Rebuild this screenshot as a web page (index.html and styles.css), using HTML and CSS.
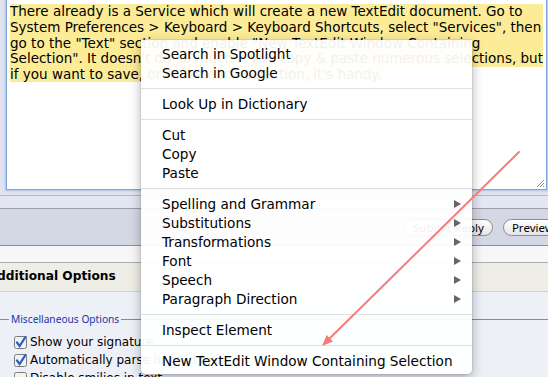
FILE: index.html
```html
<!DOCTYPE html>
<html lang="en">
<head>
  <meta charset="UTF-8" />
  <meta name="viewport" content="width=device-width, initial-scale=1.0" />
  <title>Reply</title>
  <link rel="stylesheet" href="styles.css">
</head>
<body>
  <div class="page">
    <div class="editor">
      <div class="textarea">
        <div class="line hl">There already is a Service which will create a new TextEdit document. Go to</div>
        <div class="line hl">System Preferences &gt; Keyboard &gt; Keyboard Shortcuts, select "Services", then</div>
        <div class="line hl">go to the "Text" section and enable "New TextEdit Window Containing</div>
        <div class="line hl">Selection". It doesn't do so much if you copy &amp; paste numerous selections, but</div>
        <div class="line"><span class="hl">if you want to save, or reuse each selection, it's handy.</span></div>
        <svg class="grip" width="9" height="9" viewBox="0 0 9 9">
          <path d="M1 8 L8 1 M4 8 L8 4 M7 8 L8 7" stroke="#8a8a8a" stroke-width="1" fill="none"/>
        </svg>
      </div>
    </div>

    <div class="band gap"></div>
    <div class="band lav"></div>

    <div class="toolbar">
      <button class="pill">Submit Reply</button>
      <button class="pill">Preview Post</button>
    </div>

    <div class="band plain"></div>

    <div class="section-head">Additional Options</div>

    <div class="section-body">
      <fieldset>
        <legend>Miscellaneous Options</legend>
        <label class="check">
          <svg width="13" height="13" viewBox="0 0 13 13"><rect x="0.5" y="0.5" width="12" height="12" rx="2" fill="#f2f2f2" stroke="#7b7b7b"/><path d="M3 6.5 L5.6 10 L11.5 0.8" stroke="#2f5fc0" stroke-width="2.2" fill="none" stroke-linecap="round"/></svg>
          Show your signature
        </label>
        <label class="check">
          <svg width="13" height="13" viewBox="0 0 13 13"><rect x="0.5" y="0.5" width="12" height="12" rx="2" fill="#f2f2f2" stroke="#7b7b7b"/><path d="M3 6.5 L5.6 10 L11.5 0.8" stroke="#2f5fc0" stroke-width="2.2" fill="none" stroke-linecap="round"/></svg>
          Automatically parse links in text
        </label>
        <label class="check">
          <svg width="13" height="13" viewBox="0 0 13 13"><rect x="0.5" y="0.5" width="12" height="12" rx="2" fill="#f2f2f2" stroke="#7b7b7b"/></svg>
          Disable smilies in text
        </label>
      </fieldset>
    </div>
  </div>

  <!-- context menu over the page -->
  <div class="menu">
    <div class="item">Search in Spotlight</div>
    <div class="item">Search in Google</div>
    <div class="sep"></div>
    <div class="item">Look Up in Dictionary</div>
    <div class="sep"></div>
    <div class="item">Cut</div>
    <div class="item">Copy</div>
    <div class="item">Paste</div>
    <div class="sep"></div>
    <div class="item sub">Spelling and Grammar</div>
    <div class="item sub">Substitutions</div>
    <div class="item sub">Transformations</div>
    <div class="item sub">Font</div>
    <div class="item sub">Speech</div>
    <div class="item sub">Paragraph Direction</div>
    <div class="sep"></div>
    <div class="item">Inspect Element</div>
    <div class="sep"></div>
    <div class="item">New TextEdit Window Containing Selection</div>
  </div>

  <svg class="arrow" width="548" height="377" viewBox="0 0 548 377">
    <line x1="519" y1="152" x2="329.8" y2="338.3" stroke="#f47c7c" stroke-width="2" stroke-linecap="round"/>
    <polygon points="322,346 333,341.5 326.7,335.1" fill="#f47c7c"/>
  </svg>
</body>
</html>
```

FILE: styles.css
```css
/* --- reset ---------------------------------------------------------- */
* {
  margin: 0;
  padding: 0;
  box-sizing: border-box;
}

html, body {
  width: 548px;
  height: 377px;
  overflow: hidden;
  background: #eef0f8;
  font-family: "DejaVu Sans", Verdana, sans-serif;
  color: #000;
}

.page {
  width: 548px;
}

/* --- editor --------------------------------------------------------- */
.editor {
  height: 190px;
  padding-left: 6px;
  background: #e0e3ef;
}

.textarea {
  position: relative;
  width: 541px;
  height: 191px;
  margin-top: -1px;
  padding: 4px 3px 0 3px;
  background: #fff;
  border: 1px solid #7fa3d6;
  box-shadow: 0 0 2px 1px #a9c4ea;
  font-size: 13.5px;
  line-height: 15.8px;
}

.line {
  white-space: nowrap;
  overflow: hidden;
}
.hl {
  background: #fcec98;
}

.grip {
  position: absolute;
  right: 1px;
  bottom: 1px;
}

/* --- bands under the editor ----------------------------------------- */
.band.gap {
  height: 7px;
  background: #e3e4eb;
  border-bottom: 1px solid #b6b8c3;
}
.band.lav {
  height: 13px;
  background: #e3e6f3;
  border-bottom: 1px solid #9c9eaa;
}
.band.plain {
  height: 17px;
  background: #f7f7f8;
  border-bottom: 1px solid #adadb2;
}

.toolbar {
  height: 37px;
  display: flex;
  gap: 10px;
  padding: 10px 0 0 404px;
  background: #d4d7e4;
  border-bottom: 1px solid #8d8f99;
  white-space: nowrap;
}
.pill {
  flex: none;
  height: 17px;
  padding: 0 8px;
  border: 1px solid #8b8b8b;
  border-radius: 9px;
  background: linear-gradient(#ffffff, #e6e6e6);
  font-family: "Noto Sans", sans-serif;
  font-size: 11.5px;
  line-height: 15px;
  color: #000;
}

.section-head {
  height: 29px;
  padding-top: 6px;
  text-indent: -12.4px;
  background: #eeede6;
  border-bottom: 1px solid #d0d0d4;
  font-size: 12.2px;
  font-weight: bold;
  white-space: nowrap;
}

/* --- options -------------------------------------------------------- */
.section-body {
  padding-top: 20px;
}

fieldset {
  margin-left: -6px;
  padding: 7px 0 0 14px;
  border: 1px solid #8a8a8a;
  border-right: none;
}
legend {
  padding: 0 2px;
  font-family: "Noto Sans", sans-serif;
  font-size: 10.2px;
  color: #2233a8;
}

.check {
  display: flex;
  align-items: center;
  gap: 3px;
  height: 18px;
  padding-left: 5px;
  font-size: 12px;
  white-space: nowrap;
}
.check svg {
  flex: none;
}

/* --- context menu --------------------------------------------------- */
.menu {
  position: absolute;
  left: 141px;
  top: 40px;
  width: 331px;
  padding: 4px 0;
  background: rgba(255, 255, 255, 0.94);
  border-radius: 0 0 5px 5px;
  box-shadow: 0 4px 12px rgba(0, 0, 0, 0.3), 0 0 0 1px rgba(0, 0, 0, 0.06);
  font-size: 13.6px;
}
.item {
  display: flex;
  align-items: center;
  justify-content: space-between;
  height: 19px;
  padding: 0 11px 0 21px;
  white-space: nowrap;
}
.item.sub::after {
  content: "";
  border-left: 7px solid #666;
  border-top: 4.5px solid transparent;
  border-bottom: 4.5px solid transparent;
}
.sep {
  height: 12px;
  display: flex;
  align-items: center;
}
.sep::before {
  content: "";
  flex: 1;
  height: 1px;
  background: #e0e0e0;
}

.arrow {
  position: absolute;
  left: 0;
  top: 0;
  pointer-events: none;
}
```
